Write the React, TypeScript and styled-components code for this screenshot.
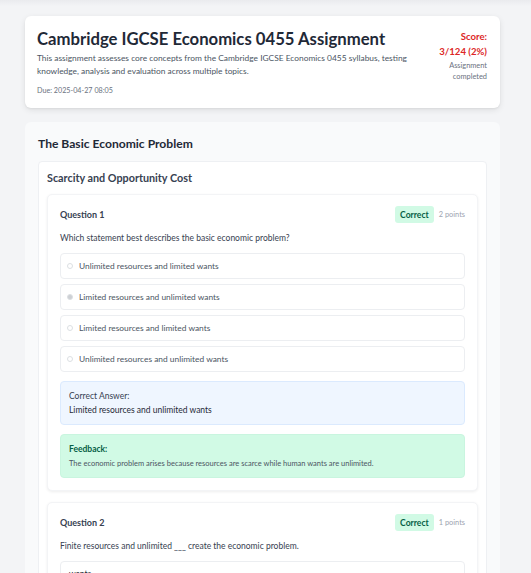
import React from "react";
import styled, { createGlobalStyle } from "styled-components";

const Global = createGlobalStyle`
  html, body { margin: 0; padding: 0; }
  body {
    background: linear-gradient(#eaebee 0, #f3f4f6 6px) no-repeat, #f3f4f6;
    font-family: Lato, "Liberation Sans", sans-serif;
    color: #1f2937;
  }
  * { box-sizing: border-box; }
`;

const Page = styled.div`
  width: 475px;
  margin-left: 25px;
  padding: 16px 0 0;
  display: flex;
  flex-direction: column;
  gap: 14px;
`;

const HeaderCard = styled.header`
  background: #ffffff;
  border-radius: 6px;
  box-shadow: 0 2px 6px rgba(0, 0, 0, 0.09), 0 1px 2px rgba(0, 0, 0, 0.05);
  padding: 11px 13px 12px 12px;
  display: flex;
  justify-content: space-between;
  gap: 16px;
`;

const HeaderMain = styled.div`
  flex: 1;
  min-width: 0;
`;

const Title = styled.h1`
  margin: 0;
  font-size: 16.7px;
  line-height: 24px;
  font-weight: 700;
  color: #1f2937;
`;

const Description = styled.p`
  margin: 1px 0 0;
  font-size: 8.4px;
  line-height: 13px;
  color: #4b5563;
`;

const Due = styled.p`
  margin: 7px 0 0;
  font-size: 7.2px;
  line-height: 11px;
  color: #6b7280;
`;

const ScoreBox = styled.div`
  flex-shrink: 0;
  width: 56px;
  text-align: right;
  padding-top: 2px;
`;

const ScoreLine = styled.div`
  font-size: 9.6px;
  line-height: 15px;
  font-weight: 700;
  color: #dc2626;
`;

const ScoreNote = styled.div`
  font-size: 7.4px;
  line-height: 11px;
  color: #6b7280;
  margin-top: 1px;
`;

const Section = styled.section`
  background: #f9fafb;
  border-radius: 6px;
  padding: 13px 13px 13px;
`;

const SectionTitle = styled.h2`
  margin: 0 0 8px;
  font-size: 12.1px;
  line-height: 18px;
  font-weight: 700;
  color: #1f2937;
`;

const SubSection = styled.div`
  background: #ffffff;
  border: 1px solid #eef0f3;
  border-radius: 4px;
  padding: 8px 8px 9px;
  display: flex;
  flex-direction: column;
  gap: 11px;
`;

const SubTitle = styled.h3`
  margin: 0 0 -2px;
  font-size: 10.8px;
  line-height: 15px;
  font-weight: 700;
  color: #374151;
`;

const QuestionCard = styled.div`
  background: #ffffff;
  border: 1px solid #f3f4f6;
  border-radius: 5px;
  box-shadow: 0 1px 3px rgba(0, 0, 0, 0.07);
  padding: 11px 12px 12px;
`;

const QuestionHead = styled.div`
  display: flex;
  align-items: center;
  justify-content: space-between;
  height: 17px;
`;

const QuestionLabel = styled.div`
  font-size: 9px;
  font-weight: 700;
  color: #374151;
`;

const Meta = styled.div`
  display: flex;
  align-items: center;
  gap: 5px;
`;

const Badge = styled.span`
  display: inline-flex;
  align-items: center;
  height: 17px;
  padding: 0 5px;
  border-radius: 3px;
  background: #d1fae5;
  color: #065f46;
  font-size: 8.6px;
  font-weight: 700;
`;

const Points = styled.span`
  font-size: 7.4px;
  color: #9ca3af;
`;

const Prompt = styled.p`
  margin: 9px 0 8px;
  font-size: 8.5px;
  line-height: 13px;
  color: #374151;
`;

const Options = styled.div`
  display: flex;
  flex-direction: column;
  gap: 5px;
`;

const Option = styled.div`
  height: 26px;
  border: 1px solid #eceef1;
  border-radius: 4px;
  background: #ffffff;
  display: flex;
  align-items: center;
  padding: 0 6px;
  gap: 6px;
  font-size: 8.4px;
  color: #4b5563;
`;

const Radio = styled.span<{ $checked?: boolean }>`
  width: 6px;
  height: 6px;
  border-radius: 50%;
  border: 1px solid #dcdfe3;
  background: ${(p) => (p.$checked ? "#cdd0d4" : "#ffffff")};
  flex-shrink: 0;
`;

const InfoBox = styled.div<{ $tone: "blue" | "green" }>`
  margin-top: 9px;
  border-radius: 4px;
  padding: 8px 8px 7px;
  background: ${(p) => (p.$tone === "blue" ? "#eff6ff" : "#d1fae5")};
  border: 1px solid ${(p) => (p.$tone === "blue" ? "#dbeafe" : "#c9f5df")};
`;

const InfoLabel = styled.div<{ $tone: "blue" | "green" }>`
  font-size: 8.5px;
  line-height: 13px;
  font-weight: ${(p) => (p.$tone === "blue" ? 400 : 700)};
  color: ${(p) => (p.$tone === "blue" ? "#374151" : "#065f46")};
`;

const InfoText = styled.div<{ $small?: boolean }>`
  margin-top: 1px;
  font-size: ${(p) => (p.$small ? "7.5px" : "8.5px")};
  line-height: 13px;
  color: ${(p) => (p.$small ? "#4b5563" : "#1f2937")};
`;

const AnswerField = styled.div`
  border: 1px solid #eceef1;
  border-radius: 4px;
  background: #ffffff;
  padding: 6px 8px;
  font-size: 8.5px;
  line-height: 13px;
  color: #1f2937;
  height: 26px;
`;

const options = [
  "Unlimited resources and limited wants",
  "Limited resources and unlimited wants",
  "Limited resources and limited wants",
  "Unlimited resources and unlimited wants",
];

export default function App() {
  return (
    <>
      <Global />
      <Page>
        <HeaderCard>
          <HeaderMain>
            <Title>Cambridge IGCSE Economics 0455 Assignment</Title>
            <Description>
              This assignment assesses core concepts from the Cambridge IGCSE Economics 0455 syllabus, testing
              knowledge, analysis and evaluation across multiple topics.
            </Description>
            <Due>Due: 2025-04-27 08:05</Due>
          </HeaderMain>
          <ScoreBox>
            <ScoreLine>Score:</ScoreLine>
            <ScoreLine>3/124 (2%)</ScoreLine>
            <ScoreNote>Assignment completed</ScoreNote>
          </ScoreBox>
        </HeaderCard>

        <Section>
          <SectionTitle>The Basic Economic Problem</SectionTitle>
          <SubSection>
            <SubTitle>Scarcity and Opportunity Cost</SubTitle>
            <QuestionCard>
              <QuestionHead>
                <QuestionLabel>Question 1</QuestionLabel>
                <Meta>
                  <Badge>Correct</Badge>
                  <Points>2 points</Points>
                </Meta>
              </QuestionHead>
              <Prompt>Which statement best describes the basic economic problem?</Prompt>
              <Options>
                {options.map((o, i) => (
                  <Option key={o}>
                    <Radio $checked={i === 1} />
                    {o}
                  </Option>
                ))}
              </Options>
              <InfoBox $tone="blue">
                <InfoLabel $tone="blue">Correct Answer:</InfoLabel>
                <InfoText>Limited resources and unlimited wants</InfoText>
              </InfoBox>
              <InfoBox $tone="green">
                <InfoLabel $tone="green">Feedback:</InfoLabel>
                <InfoText $small>
                  The economic problem arises because resources are scarce while human wants are unlimited.
                </InfoText>
              </InfoBox>
            </QuestionCard>

            <QuestionCard>
              <QuestionHead>
                <QuestionLabel>Question 2</QuestionLabel>
                <Meta>
                  <Badge>Correct</Badge>
                  <Points>1 points</Points>
                </Meta>
              </QuestionHead>
              <Prompt>Finite resources and unlimited ___ create the economic problem.</Prompt>
              <AnswerField>wants</AnswerField>
            </QuestionCard>
          </SubSection>
        </Section>
      </Page>
    </>
  );
}
